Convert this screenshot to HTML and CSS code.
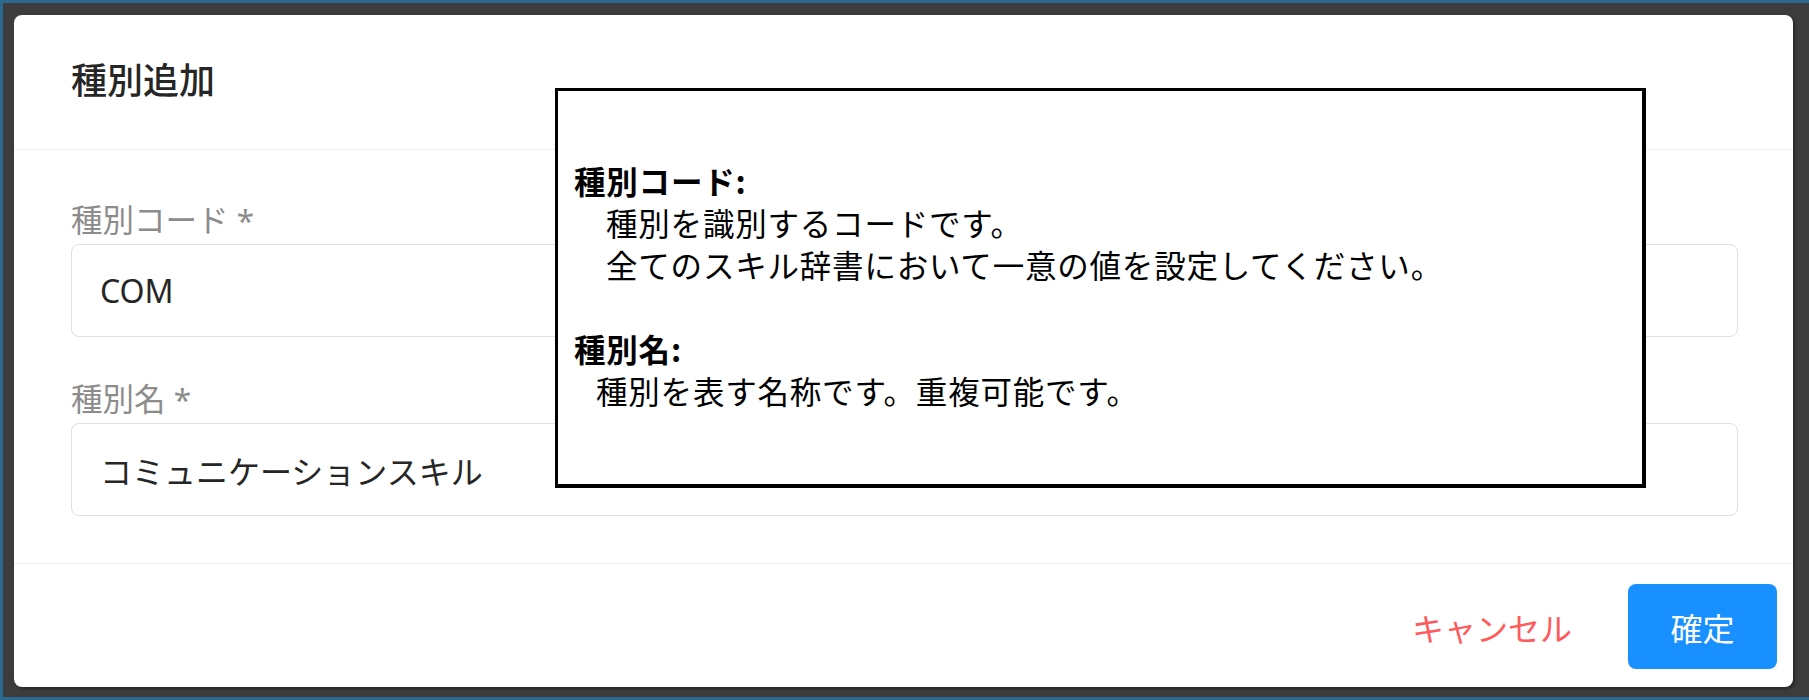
FILE: index.html
```html
<!DOCTYPE html>
<html lang="ja">
<head>
    <meta charset="UTF-8">
    <meta name="viewport" content="width=device-width, initial-scale=1.0">
    <title>種別追加</title>
    <link rel="stylesheet" href="styles.css">
</head>
<body>
    <div class="screen">
        <div class="modal">
            <div class="modal-header">
                <div class="modal-title">種別追加</div>
            </div>
            <div class="modal-body">
                <div class="form-item">
                    <label for="type-code">種別コード *</label>
                    <input type="text" id="type-code" value="COM">
                </div>
                <div class="form-item">
                    <label for="type-name">種別名 *</label>
                    <input type="text" id="type-name" value="コミュニケーションスキル">
                </div>
            </div>
            <div class="modal-footer">
                <button class="btn-cancel">キャンセル</button>
                <button class="btn-ok">確定</button>
            </div>
        </div>

        <!-- help note laid over the form -->
        <div class="help-box">
            <div class="help-title">種別コード:</div>
            <div class="help-text indent-wide">種別を識別するコードです。</div>
            <div class="help-text indent-wide">全てのスキル辞書において一意の値を設定してください。</div>
            <div class="help-gap"></div>
            <div class="help-title">種別名:</div>
            <div class="help-text indent-narrow">種別を表す名称です。重複可能です。</div>
        </div>
    </div>
</body>
</html>
```

FILE: styles.css
```css
body {
    margin: 0;
    padding: 0;
    background-color: #3c3c3c;
    font-family: "Noto Sans", "Noto Sans CJK JP", sans-serif;
}
.screen {
    position: relative;
    box-sizing: border-box;
    width: 1809px;
    height: 700px;
    padding: 12px 0 0 11px;
    border-top: 3px solid #2b6a90;
    border-left: 3px solid #2b6a90;
    border-bottom: 3px solid #2b6a90;
    overflow: hidden;
}
.modal {
    width: 1779px;
    background-color: #fff;
    border-radius: 8px;
    box-shadow: 2px 2px 3px rgba(0, 0, 0, 0.35);
}
.modal-header {
    padding: 43px 57px 45px;
    border-bottom: 1px solid #f0f0f0;
}
.modal-title {
    font-size: 36px;
    line-height: 46px;
    font-weight: 500;
    color: #262626;
}
.modal-body {
    padding: 50px 55px 47px 57px;
}
.form-item {
    display: flex;
    flex-direction: column;
}
.form-item + .form-item {
    margin-top: 42px;
}
.form-item label {
    font-size: 31.5px;
    line-height: 40px;
    color: #8c8c8c;
    margin-bottom: 4px;
}
.form-item input {
    box-sizing: border-box;
    height: 93px;
    padding: 0 28px;
    font-family: "Noto Sans", "Noto Sans CJK JP", sans-serif;
    font-size: 32px;
    color: #262626;
    border: 1px solid #e0e0e0;
    border-radius: 8px;
    outline: none;
}
.modal-footer {
    display: flex;
    justify-content: flex-end;
    align-items: center;
    gap: 28px;
    padding: 20px 16px 18px;
    border-top: 1px solid #f0f0f0;
}
.modal-footer button {
    height: 85px;
    font-family: "Noto Sans", "Noto Sans CJK JP", sans-serif;
    font-size: 32px;
    border: none;
    border-radius: 8px;
    cursor: pointer;
}
.btn-cancel {
    padding: 0 28px;
    background: none;
    color: #ff5a5c;
}
.btn-ok {
    width: 149px;
    padding: 0;
    background-color: #1890ff;
    color: #fff;
}
.help-box {
    position: absolute;
    left: 552px;
    top: 85px;
    box-sizing: border-box;
    width: 1091px;
    height: 400px;
    padding: 68px 16px 0;
    background-color: #fff;
    border: 3px solid #000;
    border-right-width: 4px;
    border-bottom-width: 4px;
    font-family: "Noto Sans CJK JP", sans-serif;
    font-size: 31.5px;
    line-height: 42px;
    letter-spacing: 0.8px;
    color: #000;
}
.help-title {
    font-weight: 700;
}
.help-gap {
    height: 42px;
}
.indent-wide {
    padding-left: 32px;
}
.indent-narrow {
    padding-left: 22px;
}
```
